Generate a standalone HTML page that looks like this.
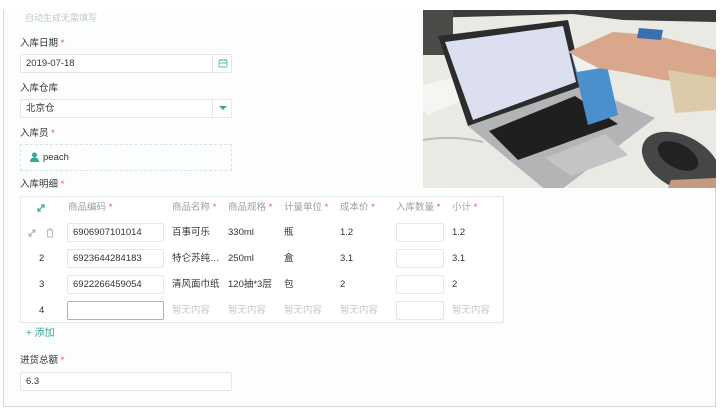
<!DOCTYPE html>
<html><head><meta charset="utf-8"><style>
*{margin:0;padding:0;box-sizing:border-box}
body{width:720px;height:409px;background:#fff;font-family:"Liberation Sans","Noto Sans CJK SC",sans-serif;font-size:9.5px;line-height:12px;color:#333;position:relative;overflow:hidden}
.frame{position:absolute;left:3px;top:10px;width:713px;height:397px;border:1px solid #d6d6d6;border-top:none;background:#fcfdfd}
.a{position:absolute;white-space:nowrap;line-height:12px}
.req:after{content:" *";color:#e05a4a}
.inp{position:absolute;border:1px solid #e4e7ea;background:#fff;border-radius:2px}
.g{color:#c4c8cd}
.h{color:#9aa0a6}
</style></head><body>
<div class="frame"></div>
<div class="a g" style="left:25px;top:12px;font-size:9px">自动生成无需填写</div>
<div class="a req" style="left:20px;top:38px">入库日期</div>
<div class="inp" style="left:20px;top:54px;width:212px;height:19px"></div>
<div class="a" style="left:26px;top:58px">2019-07-18</div>
<div class="a" style="left:212px;top:55px;width:1px;height:17px;background:#e4e7ea"></div>
<svg class="a" style="left:218px;top:58px" width="10" height="10"><rect x="1" y="2" width="8" height="7" rx="1" fill="none" stroke="#5fbfb0" stroke-width="1"/><line x1="3" y1="1" x2="3" y2="3" stroke="#5fbfb0"/><line x1="7" y1="1" x2="7" y2="3" stroke="#5fbfb0"/><line x1="1" y1="5" x2="9" y2="5" stroke="#5fbfb0"/></svg>
<div class="a" style="left:20px;top:83px">入库仓库</div>
<div class="inp" style="left:20px;top:99px;width:212px;height:19px"></div>
<div class="a" style="left:26px;top:103px">北京仓</div>
<div class="a" style="left:212px;top:100px;width:1px;height:17px;background:#e4e7ea"></div>
<svg class="a" style="left:219px;top:106px" width="8" height="5"><polygon points="0,0 8,0 4,4" fill="#3aa694"/></svg>
<div class="a req" style="left:20px;top:128px">入库员</div>
<div class="a" style="left:20px;top:144px;width:212px;height:27px;border:1px dashed #e0e3e6"></div>
<svg class="a" style="left:30px;top:152px" width="9" height="10"><circle cx="4.5" cy="3" r="2.5" fill="#3aa694"/><path d="M0 10 Q0 5.5 4.5 5.5 Q9 5.5 9 10Z" fill="#3aa694"/></svg>
<div class="a" style="left:43px;top:152px">peach</div>
<div class="a req" style="left:20px;top:179px">入库明细</div>
<div class="a" style="left:20px;top:196px;width:484px;height:127px;border:1px solid #e6e8eb;border-radius:2px;background:#fff"></div>
<svg class="a" style="left:37px;top:204px" width="8" height="8"><path d="M1 7L7 1M4 1H7V4M1 4V7H4" stroke="#3aa694" fill="none" stroke-width="1.2"/></svg>
<div class="a h req" style="left:68px;top:202px">商品编码</div>
<div class="a h req" style="left:172px;top:202px">商品名称</div>
<div class="a h req" style="left:228px;top:202px">商品规格</div>
<div class="a h req" style="left:284px;top:202px">计量单位</div>
<div class="a h req" style="left:340px;top:202px">成本价</div>
<div class="a h req" style="left:396px;top:202px">入库数量</div>
<div class="a h req" style="left:452px;top:202px">小计</div>
<svg class="a" style="left:28px;top:229px" width="8" height="8"><path d="M1 7L7 1M4 1H7V4M1 4V7H4" stroke="#aaa" fill="none" stroke-width="1"/></svg>
<svg class="a" style="left:46px;top:228px" width="8" height="10"><path d="M0.5 2H7.5M3 2V1H5V2M1.5 2.5V9H6.5V2.5" stroke="#bbb" fill="none"/></svg>
<div class="inp" style="left:67px;top:223px;width:97px;height:19px"></div><div class="a" style="left:73px;top:227px">6906907101014</div>
<div class="a" style="left:172px;top:227px">百事可乐</div><div class="a" style="left:228px;top:227px">330ml</div><div class="a" style="left:284px;top:227px">瓶</div><div class="a" style="left:340px;top:227px">1.2</div>
<div class="inp" style="left:396px;top:223px;width:48px;height:19px"></div><div class="a" style="left:452px;top:227px">1.2</div>
<div class="a" style="left:39px;top:253px">2</div>
<div class="inp" style="left:67px;top:249px;width:97px;height:19px"></div><div class="a" style="left:73px;top:253px">6923644284183</div>
<div class="a" style="left:172px;top:253px">特仑苏纯…</div><div class="a" style="left:228px;top:253px">250ml</div><div class="a" style="left:284px;top:253px">盒</div><div class="a" style="left:340px;top:253px">3.1</div>
<div class="inp" style="left:396px;top:249px;width:48px;height:19px"></div><div class="a" style="left:452px;top:253px">3.1</div>
<div class="a" style="left:39px;top:279px">3</div>
<div class="inp" style="left:67px;top:275px;width:97px;height:19px"></div><div class="a" style="left:73px;top:279px">6922266459054</div>
<div class="a" style="left:172px;top:279px">清风面巾纸</div><div class="a" style="left:228px;top:279px">120抽*3层</div><div class="a" style="left:284px;top:279px">包</div><div class="a" style="left:340px;top:279px">2</div>
<div class="inp" style="left:396px;top:275px;width:48px;height:19px"></div><div class="a" style="left:452px;top:279px">2</div>
<div class="a" style="left:39px;top:305px">4</div>
<div class="inp" style="left:67px;top:301px;width:97px;height:19px;border-color:#7cc9bd"></div>
<div class="a g" style="left:172px;top:305px">暂无内容</div><div class="a g" style="left:228px;top:305px">暂无内容</div><div class="a g" style="left:284px;top:305px">暂无内容</div><div class="a g" style="left:340px;top:305px">暂无内容</div>
<div class="inp" style="left:396px;top:301px;width:48px;height:19px"></div><div class="a g" style="left:452px;top:305px">暂无内容</div>
<div class="a" style="left:26px;top:328px;color:#3aa694;font-size:10px">+ 添加</div>
<div class="a req" style="left:20px;top:355px">进货总额</div>
<div class="inp" style="left:20px;top:372px;width:212px;height:19px"></div>
<div class="a" style="left:26px;top:376px">6.3</div>
<svg class="a" style="left:423px;top:10px" width="293" height="178" viewBox="0 0 293 178">
<rect width="293" height="178" fill="#ebe9e4"/>
<path d="M0 0H293V12L200 10 150 4 0 8Z" fill="#3a3a38"/>
<path d="M0 0H30V45H0Z" fill="#4a4a46"/>
<path d="M0 75L30 68 40 90 5 105 0 100Z" fill="#f6f5f2"/>
<path d="M0 130Q30 125 60 132" stroke="#bbb" fill="none" stroke-width="2"/>
<path d="M15 26L145 10 160 76 45 116Z" fill="#2c2c2c"/>
<path d="M22 32L140 16 153 72 50 110Z" fill="#dcdff0"/>
<path d="M45 116L160 76 232 108 130 186Z" fill="#b3b4b5"/>
<path d="M66 121L152 86 195 114 95 150Z" fill="#1f1f1f"/>
<path d="M122 148L182 124 205 145 148 166Z" fill="#c3c4c4"/>
<path d="M148 42L180 38 195 105 165 115Z" fill="#4a90cc"/>
<path d="M148 42L180 38 178 58 154 62Z" fill="#f0f0f0"/>
<path d="M145 42L190 22 230 25 293 40 293 75 240 70 200 62 175 58Z" fill="#d9a88c"/>
<path d="M216 18L240 20 238 30 214 28Z" fill="#3a6fb0"/>
<path d="M245 60L293 68 293 100 252 103Z" fill="#dccbaa"/>
<ellipse cx="258" cy="152" rx="42" ry="26" fill="#444647" transform="rotate(28 258 152)"/>
<ellipse cx="255" cy="146" rx="22" ry="12" fill="#222" transform="rotate(28 255 146)"/>
<path d="M248 170L293 168 293 178 245 178Z" fill="#c49a80"/>
</svg>
</body></html>
